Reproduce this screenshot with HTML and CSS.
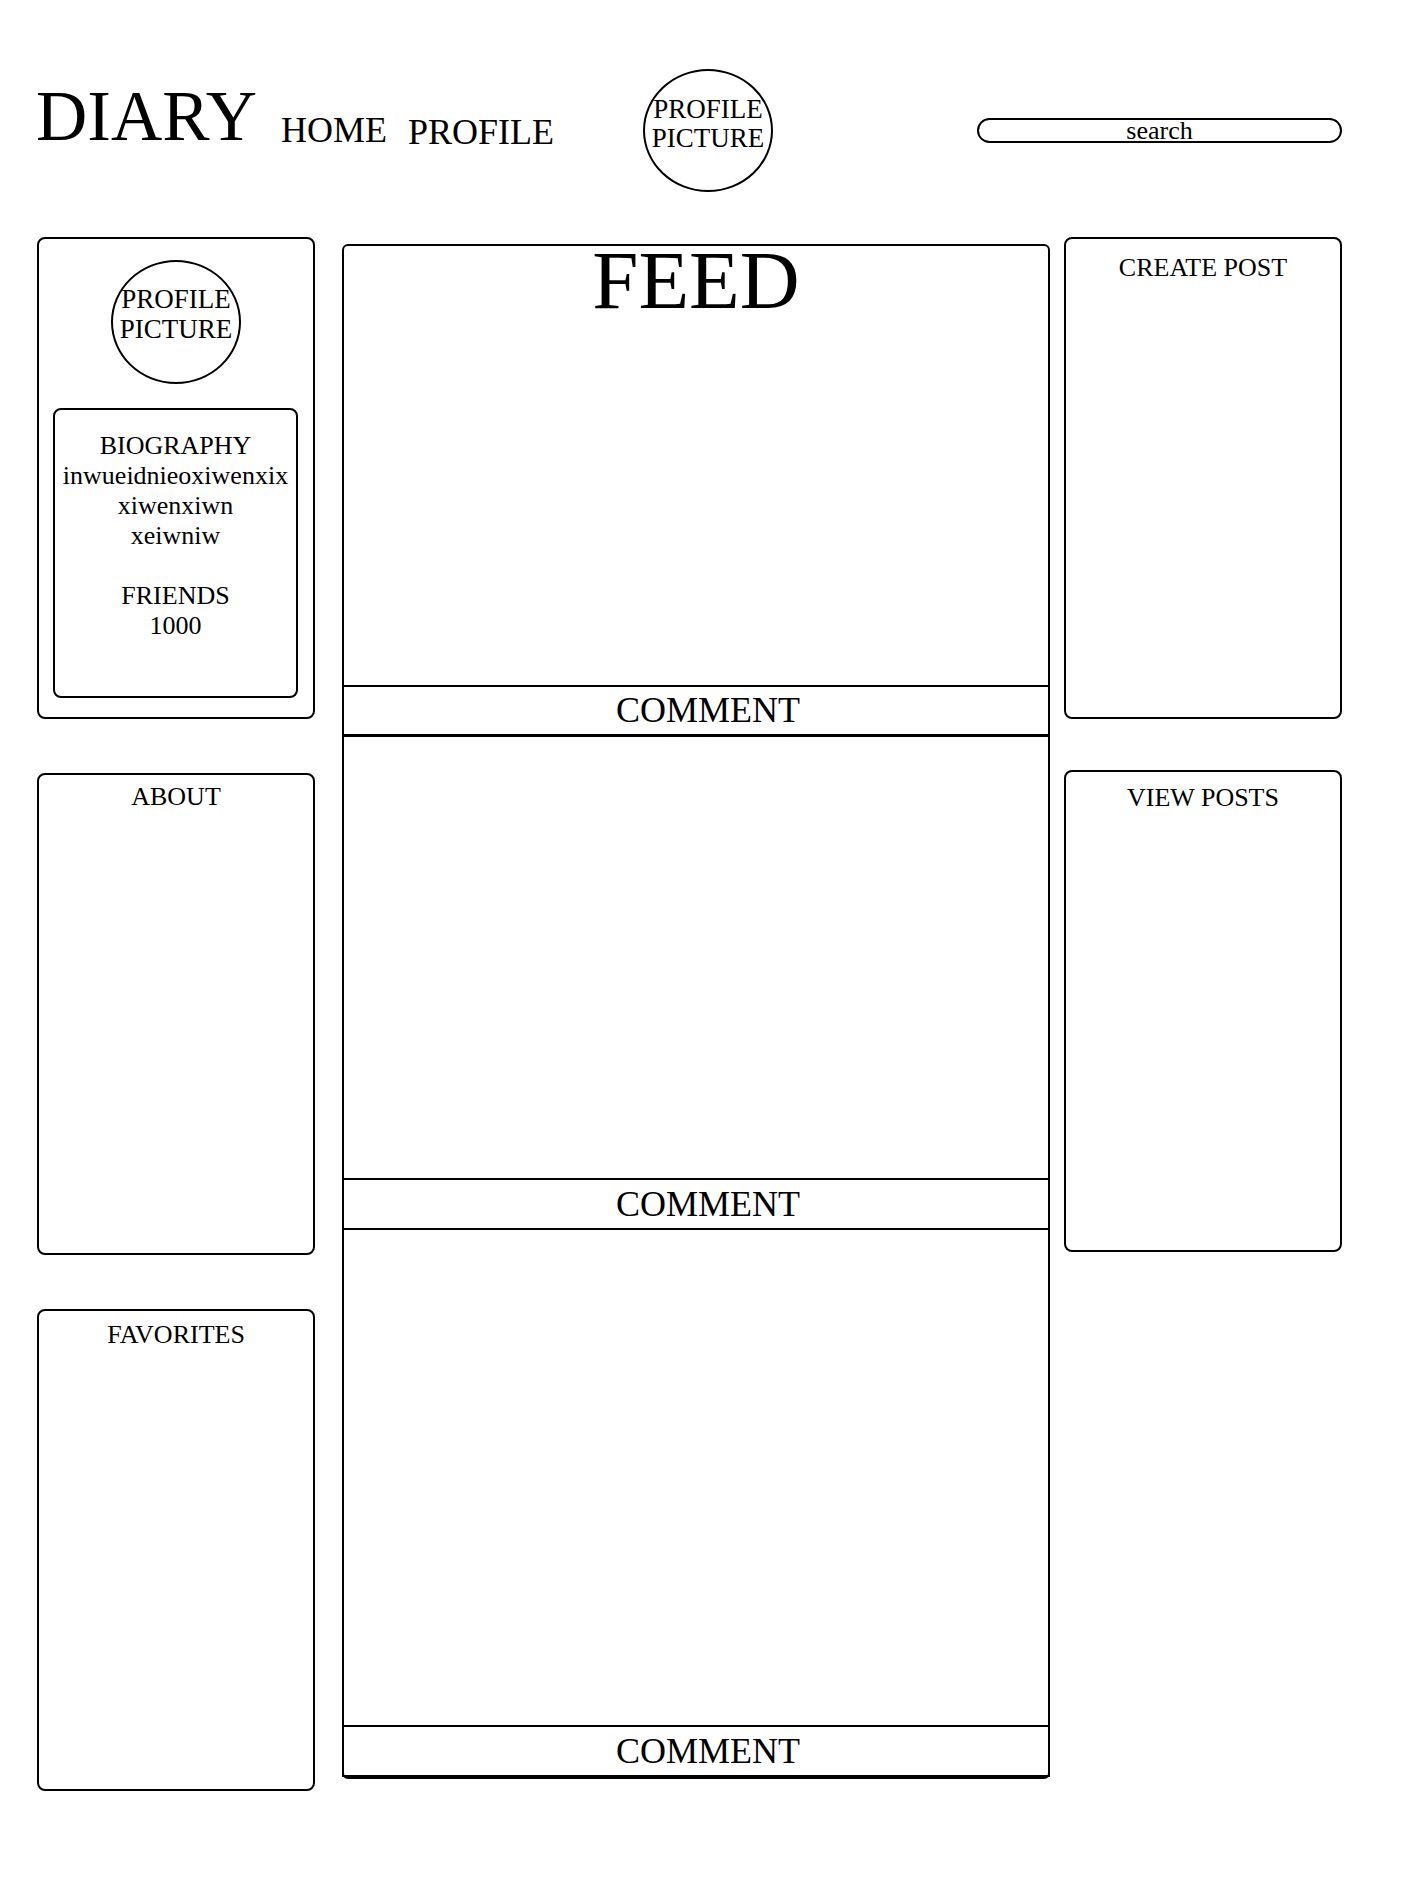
FILE: index.html
```html
<!DOCTYPE html>
<html lang="en">
<head>
<meta charset="utf-8">
<title>Diary</title>
<link rel="stylesheet" href="styles.css">
</head>
<body>
<header class="header">
  <div class="brand">
    <h1 class="logo">DIARY</h1>
    <nav class="nav">
      <a class="nav-link" href="#">HOME</a>
      <a class="nav-link nav-link-low" href="#">PROFILE</a>
    </nav>
  </div>
  <div class="avatar avatar-header">PROFILE<br>PICTURE</div>
  <div class="search">search</div>
</header>

<main class="main">
  <aside class="col col-left">
    <section class="card card-profile">
      <div class="avatar avatar-side">PROFILE<br>PICTURE</div>
      <div class="bio">
        <div class="bio-block">
          <div>BIOGRAPHY</div>
          <div>inwueidnieoxiwenxix</div>
          <div>xiwenxiwn</div>
          <div>xeiwniw</div>
        </div>
        <div class="bio-block bio-friends">
          <div>FRIENDS</div>
          <div>1000</div>
        </div>
      </div>
    </section>
    <section class="card">
      <h2 class="card-title title-about">ABOUT</h2>
    </section>
    <section class="card">
      <h2 class="card-title title-fav">FAVORITES</h2>
    </section>
  </aside>

  <section class="feed">
    <h2 class="feed-title">FEED</h2>
    <div class="post post-1"></div>
    <div class="comment comment-first">COMMENT</div>
    <div class="post post-2"></div>
    <div class="comment">COMMENT</div>
    <div class="post post-3"></div>
    <div class="comment">COMMENT</div>
  </section>

  <aside class="col col-right">
    <section class="card">
      <h2 class="card-title title-create">CREATE POST</h2>
    </section>
    <section class="card">
      <h2 class="card-title title-view">VIEW POSTS</h2>
    </section>
  </aside>
</main>
</body>
</html>
```

FILE: styles.css
```css
* {
  box-sizing: border-box;
}

body {
  margin: 0;
  background: #fff;
  color: #000;
  font-family: "Liberation Serif", "Times New Roman", serif;
}

/* ---------- header ---------- */
.header {
  display: flex;
  align-items: flex-start;
  padding: 69px 0 0 36px;
}

.brand {
  width: 607px;
  display: flex;
  align-items: flex-start;
  margin-top: 12px;
}

.logo {
  margin: 0;
  font-size: 71px;
  line-height: 70px;
  font-weight: normal;
}

.nav {
  display: flex;
  align-items: flex-start;
  gap: 21px;
  margin: 29px 0 0 24px;
  font-size: 36px;
  line-height: 40px;
}

.nav-link {
  color: #000;
  text-decoration: none;
}

.nav-link-low {
  margin-top: 2px;
}

.avatar {
  border: 2px solid #000;
  border-radius: 50%;
  text-align: center;
  font-size: 27px;
  line-height: 29px;
  padding-top: 22px;
  white-space: nowrap;
}

.avatar-header {
  width: 130px;
  height: 123px;
  flex: none;
  padding-top: 24px;
}

.search {
  margin: 49px 0 0 204px;
  width: 365px;
  height: 25px;
  border: 2px solid #000;
  border-radius: 13px;
  font-size: 26px;
  line-height: 21px;
  text-align: center;
}

/* ---------- main layout ---------- */
.main {
  display: flex;
  align-items: flex-start;
  padding-left: 37px;
  margin-top: 45px;
}

.col {
  display: flex;
  flex-direction: column;
  width: 278px;
  flex: none;
}

.col-left {
  gap: 54px;
}

.col-right {
  gap: 51px;
  margin-left: 14px;
}

.card {
  height: 482px;
  border: 2px solid #000;
  border-radius: 8px;
  text-align: center;
}

.card-title {
  margin: 0;
  font-size: 26px;
  line-height: 30px;
  font-weight: normal;
}

.title-about { padding-top: 7px; }
.title-fav { padding-top: 9px; }
.title-create { padding-top: 14px; }
.title-view { padding-top: 11px; }

/* profile card */
.avatar-side {
  width: 130px;
  height: 124px;
  margin: 21px auto 0;
  line-height: 30px;
}

.bio {
  height: 290px;
  margin: 24px 15px 0 14px;
  border: 2px solid #000;
  border-radius: 8px;
  padding-top: 21px;
  font-size: 26px;
  line-height: 30px;
  text-align: center;
  white-space: nowrap;
}

.bio-friends {
  margin-top: 30px;
}

/* ---------- feed ---------- */
.feed {
  width: 708px;
  flex: none;
  margin: 7px 0 0 27px;
  border: 2px solid #000;
  border-radius: 6px;
  display: flex;
  flex-direction: column;
}

.feed-title {
  margin: 0;
  padding-top: 4px;
  height: 63px;
  font-size: 83px;
  line-height: 60px;
  font-weight: normal;
  text-align: center;
}

.post-1 { height: 376px; }
.post-2 { height: 441px; }
.post-3 { height: 495px; }

.comment {
  height: 52px;
  margin: 0 -2px;
  border: 2px solid #000;
  font-size: 36px;
  line-height: 48px;
  text-align: center;
  padding-left: 24px;
}

.comment-first {
  border-bottom-width: 3px;
  line-height: 47px;
}
```
